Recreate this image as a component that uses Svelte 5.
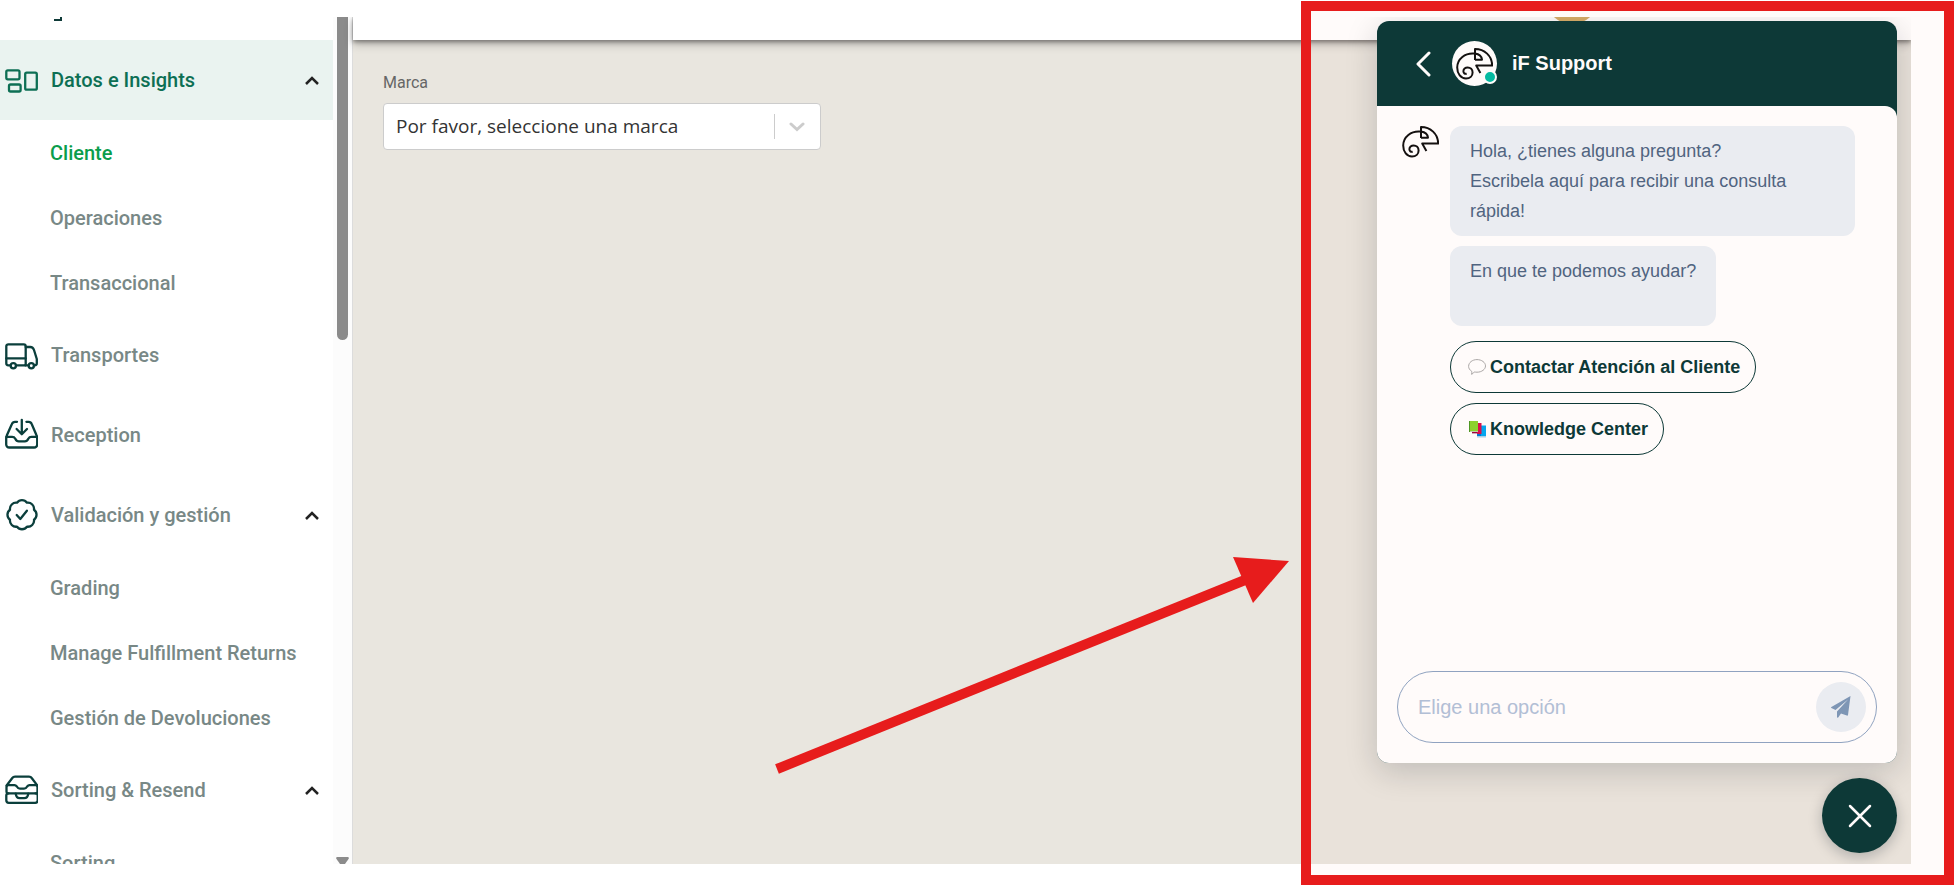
<script lang="ts">
	type Section = {
		icon: string;
		label: string;
		active?: boolean;
		open?: boolean;
		items: string[];
	};

	const sections: Section[] = [
		{
			icon: 'dashboard',
			label: 'Datos e Insights',
			active: true,
			open: true,
			items: ['Cliente', 'Operaciones', 'Transaccional']
		},
		{ icon: 'truck', label: 'Transportes', items: [] },
		{ icon: 'inbox', label: 'Reception', items: [] },
		{
			icon: 'verify',
			label: 'Validación y gestión',
			open: true,
			items: ['Grading', 'Manage Fulfillment Returns', 'Gestión de Devoluciones']
		},
		{ icon: 'trays', label: 'Sorting & Resend', open: true, items: ['Sorting'] }
	];

	let currentPage = $state('Cliente');
	let brand = $state('');
	let message = $state('');
</script>

<svelte:head>
	<title>iF Support</title>
</svelte:head>

{#snippet menuIcon(name: string)}
	<svg class="menu-icon" viewBox="0 0 34 34" aria-hidden="true">
		{#if name === 'dashboard'}
			<rect x="2.3" y="7.3" width="13.2" height="9" rx="1.5" />
			<rect x="5" y="21.5" width="11.6" height="7" rx="1.5" />
			<rect x="21.2" y="9.7" width="11.6" height="17" rx="1.5" />
		{:else if name === 'truck'}
			<path d="M6.3 27.3H4.3a2 2 0 0 1-2-2V8.3a2 2 0 0 1 2-2h15.4a2 2 0 0 1 2 2v19H12.4" />
			<path d="M2.3 20.3h19.4M21.7 9h4.6q2.7 0 3.7 3l2.8 9v4.3a2 2 0 0 1-2 2M24.3 27.3h-3" />
			<circle cx="9.3" cy="27.7" r="2.6" />
			<circle cx="27.3" cy="27.7" r="2.6" />
		{:else if name === 'inbox'}
			<path
				d="M13 3.8h-2q-2.3 0-3.2 2.4L3 17q-.8 1.7-.8 4v5.5a3 3 0 0 0 3 3h25a3 3 0 0 0 3-3V21q0-2.3-.8-4L27.8 6.2Q27 3.8 24.6 3.8h-2.2"
			/>
			<path d="M17.8 1.8v14M12.6 11l5.2 5.2 5.2-5.2" />
			<path d="M2.5 18.9h5.6q2.2 0 3.2 1.8 1.2 2.6 3.4 2.6h6.2q2.2 0 3.4-2.6 1-1.8 3.2-1.8h5.4" />
		{:else if name === 'verify'}
			<path
				d="M13 4.7a6.2 6.2 0 0 1 10 0 6.2 6.2 0 0 1 7 7 6.2 6.2 0 0 1 0 10 6.2 6.2 0 0 1-7 7 6.2 6.2 0 0 1-10 0 6.2 6.2 0 0 1-7-7 6.2 6.2 0 0 1 0-10 6.2 6.2 0 0 1 7-7z"
			/>
			<path d="M12.7 17l3.6 4 6.6-8.3" />
		{:else}
			<path d="M2.6 12.5 8.3 5q1-1.3 2.7-1.3h14Q26.8 3.7 27.7 5l5.7 7.5" />
			<path
				d="M4.3 12.2h6.2q1.3 0 2.3 1.3 1.3 2.2 3.2 2.2h4q1.9 0 3.2-2.2 1-1.3 2.3-1.3h6.2a2 2 0 0 1 1.8 2v4.2a2 2 0 0 1-2 2h-27a2 2 0 0 1-2-2v-4.2a2 2 0 0 1 1.8-2z"
			/>
			<path
				d="M4.5 20.4a2.2 2.2 0 0 0-2.2 2.2v4.7a2.5 2.5 0 0 0 2.5 2.5h26.4a2.5 2.5 0 0 0 2.5-2.5v-4.7a2.2 2.2 0 0 0-2.2-2.2"
			/>
			<path d="M11.7 20.6q.6 4.6 4 4.6h4.6q3.4 0 4-4.6" />
		{/if}
	</svg>
{/snippet}

{#snippet chameleon()}
	<svg class="chameleon" viewBox="0 0 37 32" aria-hidden="true">
		<path
			d="M19 5.6C9 4.4 1.2 11 1.2 19.5 1.2 26 5 30.6 10 30.6c4 0 6.6-2.7 6.6-6 0-3.2-2.2-5.2-4.9-5.2-2.5 0-4.3 1.7-4.3 3.9 0 1.7 1.4 3 3.3 2.4"
		/>
		<path d="M19 12V1c9.5 0 17 6.8 17.200 16.600H20.200L24.400 25" />
		<path d="M19 5.6c4 .6 6.6 2.700 7 6.100h-7" />
	</svg>
{/snippet}

<div class="page">
	<div class="app">
		<aside class="sidebar">
			<nav class="menu" aria-label="Menú">
				<div class="scrolled-out">
					<svg viewBox="0 0 8 5" aria-hidden="true"><path d="M0 3h7V0" /></svg>
				</div>
				{#each sections as section}
					<button class="section" class:active={section.active} aria-expanded={section.open}>
						{@render menuIcon(section.icon)}
						<span>{section.label}</span>
						{#if section.open}
							<svg class="caret" viewBox="0 0 14 9" aria-hidden="true">
								<path d="M1 8l6-6 6 6" />
							</svg>
						{/if}
					</button>
					{#each section.items as item}
						<a
							class="item"
							class:current={item === currentPage}
							href="#{item}"
							onclick={() => (currentPage = item)}>{item}</a
						>
					{/each}
				{/each}
			</nav>
			<div class="scrollbar" aria-hidden="true">
				<div class="thumb"></div>
				<svg viewBox="0 0 13 7"><path d="M1 0h11q1.5.5.5 2L9 7H4L.5 2Q-.5.5 1 0z" /></svg>
			</div>
		</aside>

		<div class="content">
			<header class="topbar">
				<div class="profile"></div>
			</header>
			<main>
				<label for="brand">Marca</label>
				<div class="select-box">
					<select id="brand" bind:value={brand}>
						<option value="">Por favor, seleccione una marca</option>
					</select>
					<svg viewBox="0 0 16 10" aria-hidden="true"><path d="M2 2l6 5.5L14 2" /></svg>
				</div>
			</main>
		</div>

		<div class="widget">
			<section class="chat" aria-label="iF Support">
				<header class="chat-header">
					<button class="back" aria-label="Volver">
						<svg viewBox="0 0 15 26" aria-hidden="true"><path d="M13 2 2 13l11 11" /></svg>
					</button>
					<div class="avatar">
						{@render chameleon()}
						<span class="online"></span>
					</div>
					<h2>iF Support</h2>
				</header>
				<div class="chat-body">
					<div class="thread">
						{@render chameleon()}
						<div class="messages">
							<p class="bubble">
								Hola, ¿tienes alguna pregunta?<br />Escribela aquí para recibir una consulta rápida!
							</p>
							<p class="bubble">En que te podemos ayudar?<br /><br /></p>
							<div class="options">
								<button>
									<svg viewBox="0 0 18 18" aria-hidden="true">
										<path
											class="balloon"
											d="M3.500 16.300c.4-1 .5-2 .2-3C1.700 12 .6 10.300.6 8.400.6 4.500 4.300 1.600 9 1.600s8.500 2.900 8.500 6.300-3.700 6.300-8.500 6.300c-1 0-1.800-.1-2.600-.3-.8 1.200-1.800 2-2.900 2.400z"
										/>
									</svg>
									Contactar Atención al Cliente
								</button>
								<button>
									<svg viewBox="0 0 18 18" aria-hidden="true">
										<path fill="#0078d7" d="M9 12h6v4H9z" />
										<path fill="#00a8f3" d="M13 5.5h5V16h-5z" />
										<path fill="#a9d3ea" d="M9 16h9v1.500H9z" />
										<path fill="#a0003c" d="M4 11h6v3H4z" />
										<path fill="#d9104f" d="M9 3h4.500v11H9z" />
										<path fill="#c9a9ba" d="M4 13h5v1H4z" />
										<path fill="#4c9a24" d="M1 1h1v11H1z" />
										<path fill="#8bd62f" d="M2 1h8v10H2z" />
										<path fill="#c3cfae" d="M2 11h8v1H2z" />
									</svg>
									Knowledge Center
								</button>
							</div>
						</div>
					</div>
					<form class="composer" onsubmit={(e) => e.preventDefault()}>
						<input
							type="text"
							aria-label="Mensaje"
							placeholder="Elige una opción"
							bind:value={message}
						/>
						<button class="send" aria-label="Enviar">
							<svg viewBox="0 0 20 22" aria-hidden="true">
								<path
									d="M19.500 0 .4 11q-.8.6 0 1l4.100 2L17 3.500 6 15.500V21q.3 1.200 1.200.4L10 17.600l5.800 2q1 .2 1.200-.7z"
								/>
							</svg>
						</button>
					</form>
				</div>
			</section>
			<button class="close" aria-label="Cerrar">
				<svg viewBox="0 0 24 24" aria-hidden="true"><path d="M2 2l20 20M22 2L2 22" /></svg>
			</button>
		</div>
	</div>

	<svg class="arrow" viewBox="0 0 514 216" aria-hidden="true">
		<path class="shaft" d="M2 212 470 23" />
		<path d="M458 0 514 4 478 46z" />
	</svg>
	<div class="highlight"></div>
</div>

<style>
	:global(body) {
		margin: 0;
		background: #fff;
	}

	.page {
		position: relative;
		box-sizing: border-box;
		height: 100vh;
		padding: 17px 43px 21px 0;
		overflow: hidden;
		font-family: Roboto, 'Liberation Sans', sans-serif;
	}

	.app {
		position: relative;
		display: flex;
		height: 100%;
		overflow: hidden;
	}

	button {
		border: none;
		background: none;
		padding: 0;
		font: inherit;
		color: inherit;
		cursor: pointer;
	}

	svg {
		display: block;
		flex: none;
	}

	/* Sidebar */
	.sidebar {
		display: flex;
		flex: none;
		width: 352px;
		border-right: 1px solid #dcdcdc;
		background: #fff;
	}

	.menu {
		flex: 1;
		display: flex;
		flex-direction: column;
		font-size: 20px;
		font-weight: 500;
		color: #788886;
	}

	.scrolled-out {
		flex: none;
		height: 23px;
		padding-left: 54px;
	}

	.scrolled-out svg {
		width: 8px;
		height: 5px;
		fill: none;
		stroke: #0e3a38;
		stroke-width: 2;
	}

	.section {
		display: flex;
		align-items: center;
		flex: none;
		gap: 13px;
		height: 80px;
		padding: 0 14px 0 4px;
		text-align: left;
	}

	.section span {
		flex: 1;
	}

	.section.active {
		background: #eaf3f0;
		color: #0d6f54;
	}

	.menu-icon {
		width: 34px;
		height: 34px;
		fill: none;
		stroke: #0b3f3c;
		stroke-width: 2.3;
		stroke-linecap: round;
		stroke-linejoin: round;
	}

	.active .menu-icon {
		stroke: #0d6f54;
	}

	.caret {
		width: 14px;
		height: 9px;
		fill: none;
		stroke: #222;
		stroke-width: 2.5;
	}

	.item {
		display: flex;
		align-items: center;
		flex: none;
		height: 65px;
		padding-left: 50px;
		color: inherit;
		text-decoration: none;
	}

	.item.current {
		color: #0a9d4c;
	}

	.scrollbar {
		display: flex;
		flex-direction: column;
		align-items: center;
		justify-content: space-between;
		width: 19px;
		background: #fcfcfc;
	}

	.thumb {
		width: 11px;
		height: 323px;
		border-radius: 0 0 6px 6px;
		background: #8b8b8b;
	}

	.scrollbar svg {
		width: 13px;
		height: 7px;
		fill: #8b8b8b;
	}

	/* Content */
	.content {
		flex: 1;
		background: #e9e6df;
	}

	.topbar {
		display: flex;
		align-items: flex-end;
		justify-content: flex-end;
		box-sizing: border-box;
		height: 23px;
		padding: 0 312px 16px 0;
		background: #fff;
		box-shadow:
			0 2px 4px rgba(0, 0, 0, 0.35),
			0 4px 10px rgba(0, 0, 0, 0.25);
	}

	.profile {
		flex: none;
		width: 54px;
		height: 54px;
		border-radius: 50%;
		background: #d6b06c;
	}

	main {
		display: flex;
		flex-direction: column;
		gap: 10px;
		padding: 33px 30px;
	}

	label {
		font-size: 16px;
		line-height: 20px;
		color: #666;
	}

	.select-box {
		display: flex;
		align-items: center;
		box-sizing: border-box;
		width: 438px;
		height: 47px;
		padding-right: 15px;
		border: 1px solid #ccc;
		border-radius: 4px;
		background: #fff;
	}

	select {
		flex: 1;
		appearance: none;
		height: 25px;
		margin-right: 14px;
		padding: 0 0 0 12px;
		border: none;
		border-right: 1px solid #ccc;
		background: none;
		font-family: 'Segoe UI', 'Open Sans', sans-serif;
		font-size: 19px;
		line-height: 25px;
		color: #333;
	}

	.select-box svg {
		width: 16px;
		height: 10px;
		fill: none;
		stroke: #ccc;
		stroke-width: 3;
		stroke-linecap: round;
	}

	/* Chat widget */
	.widget {
		position: absolute;
		top: 4px;
		right: 14px;
		bottom: 11px;
		display: flex;
		flex-direction: column;
		align-items: flex-end;
		gap: 15px;
		width: 520px;
		font-family: Arial, 'Liberation Sans', sans-serif;
	}

	.chat {
		display: flex;
		flex: 1;
		flex-direction: column;
		width: 100%;
		border-radius: 12px;
		overflow: hidden;
		background: #093a39;
		box-shadow: 0 8px 32px rgba(0, 18, 26, 0.18);
	}

	.chat-header {
		display: flex;
		align-items: center;
		flex: none;
		height: 85px;
		padding-left: 39px;
		color: #fff;
	}

	.back svg {
		width: 15px;
		height: 26px;
		fill: none;
		stroke: #fff;
		stroke-width: 3;
		stroke-linecap: round;
		stroke-linejoin: round;
	}

	.avatar {
		position: relative;
		display: flex;
		align-items: center;
		justify-content: center;
		width: 45px;
		height: 45px;
		margin: 0 15px 0 21px;
		border-radius: 50%;
		background: #fff;
	}

	.online {
		position: absolute;
		right: 0;
		bottom: 2px;
		width: 10px;
		height: 10px;
		border: 2px solid #fff;
		border-radius: 50%;
		background: #00bda5;
	}

	.chameleon {
		width: 37px;
		height: 32px;
		fill: none;
		stroke: #111;
		stroke-width: 2;
		stroke-linejoin: round;
	}

	h2 {
		margin: 0;
		font-size: 20px;
		font-weight: 700;
	}

	.chat-body {
		display: flex;
		flex: 1;
		flex-direction: column;
		justify-content: space-between;
		padding: 20px;
		border-top-right-radius: 12px;
		background: #fff;
	}

	.thread {
		display: flex;
		align-items: flex-start;
		gap: 11px;
		padding: 0 22px 0 5px;
	}

	.messages {
		display: flex;
		flex: 1;
		flex-direction: column;
		align-items: flex-start;
		gap: 10px;
	}

	.bubble {
		margin: 0;
		padding: 10px 20px;
		border-radius: 12px;
		background: #eaf0f6;
		font-size: 18px;
		line-height: 30px;
		color: #4d6583;
	}

	.options {
		display: flex;
		flex-direction: column;
		align-items: flex-start;
		gap: 10px;
		padding-top: 5px;
	}

	.options button {
		display: flex;
		align-items: center;
		box-sizing: border-box;
		gap: 4px;
		height: 52px;
		padding: 0 15px 0 17px;
		border: 1px solid #093a39;
		border-radius: 26px;
		font-size: 18px;
		font-weight: 700;
		color: #093a39;
	}

	.options svg {
		width: 18px;
		height: 18px;
	}

	.balloon {
		fill: #fff;
		stroke: #aaa;
		stroke-width: 1;
	}

	.composer {
		display: flex;
		align-items: center;
		box-sizing: border-box;
		height: 72px;
		padding: 0 10px 0 20px;
		border: 1px solid #8ea5c4;
		border-radius: 36px;
	}

	input {
		flex: 1;
		min-width: 0;
		padding: 0;
		border: none;
		outline: none;
		background: none;
		font: inherit;
		font-size: 20px;
		color: #4d6583;
	}

	input::placeholder {
		color: #b1c2da;
		opacity: 1;
	}

	.send {
		display: flex;
		align-items: center;
		justify-content: center;
		width: 50px;
		height: 50px;
		border-radius: 50%;
		background: #eaf0f6;
	}

	.send svg {
		width: 20px;
		height: 22px;
		fill: #7c98b9;
	}

	.close {
		display: flex;
		align-items: center;
		justify-content: center;
		flex: none;
		width: 75px;
		height: 75px;
		border-radius: 50%;
		background: #093a39;
		box-shadow: 0 4px 14px rgba(0, 18, 26, 0.25);
	}

	.close svg {
		width: 24px;
		height: 24px;
		stroke: #fff;
		stroke-width: 2.5;
		stroke-linecap: round;
	}

	/* Callout over the page */
	.arrow {
		position: absolute;
		right: 665px;
		bottom: 112px;
		width: 514px;
		height: 216px;
		overflow: visible;
		fill: #e71c1c;
		pointer-events: none;
	}

	.shaft {
		stroke: #e71c1c;
		stroke-width: 10;
	}

	.highlight {
		position: absolute;
		top: 1px;
		right: 0;
		bottom: 0;
		box-sizing: border-box;
		width: 653px;
		border: 10px solid #e71c1c;
		background: rgba(255, 40, 20, 0.02);
		pointer-events: none;
	}
</style>
